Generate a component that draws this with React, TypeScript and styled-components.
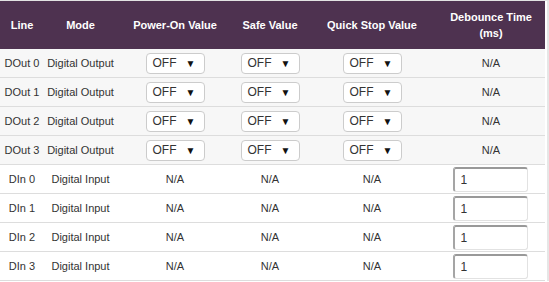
import { createGlobalStyle, styled } from "styled-components"

const Global = createGlobalStyle`
    body {
        margin: 0;
        background: #ffffff;
        font-family: "Liberation Sans", Arial, sans-serif;
    }
`

const Frame = styled.div`
    width: 547px;
    border-top: 1px solid #e2e2e2;
    border-right: 2px solid #e6e6e6;
`

const Table = styled.table`
    width: 545px;
    border-collapse: collapse;
    table-layout: fixed;
    font-size: 11px;
    color: #333333;
`

const HeadCell = styled.th`
    background: #4e3250;
    color: #ffffff;
    font-weight: bold;
    font-size: 11px;
    line-height: 16px;
    height: 48px;
    padding: 0 2px;
    text-align: center;
    vertical-align: middle;
`

const Row = styled.tr<{ $shade?: boolean }>`
    background: ${(p) => (p.$shade ? "#f7f7f7" : "#ffffff")};
    border-bottom: 1px solid #dddddd;
`

const Cell = styled.td`
    height: 28px;
    padding: 0;
    text-align: center;
    vertical-align: middle;
    white-space: nowrap;
`

const Select = styled.div`
    display: inline-flex;
    align-items: center;
    justify-content: space-between;
    box-sizing: border-box;
    width: 59px;
    height: 21px;
    padding: 0 8px 0 6px;
    border: 1px solid #cccccc;
    border-radius: 4px;
    background: #ffffff;
    font-size: 12px;
    color: #333333;
    vertical-align: middle;
`

const Arrow = styled.span`
    font-size: 10px;
    color: #111111;
`

const Input = styled.input`
    box-sizing: border-box;
    width: 75px;
    height: 25px;
    padding: 0 0 0 6px;
    border-top: 2px solid #999999;
    border-left: 2px solid #a5a5a5;
    border-right: 1px solid #e2e2e2;
    border-bottom: 1px solid #e2e2e2;
    border-radius: 3px;
    font-family: "Liberation Sans", Arial, sans-serif;
    font-size: 12px;
    color: #333333;
    vertical-align: middle;
    margin-left: -2px;
`

function OffSelect() {
    return (
        <Select>
            <span>OFF</span>
            <Arrow>▼</Arrow>
        </Select>
    )
}

const outputs = [0, 1, 2, 3]
const inputs = [0, 1, 2, 3]

export default function App() {
    return (
        <>
            <Global />
            <Frame>
                <Table>
                    <colgroup>
                        <col style={{ width: 44 }} />
                        <col style={{ width: 73 }} />
                        <col style={{ width: 116 }} />
                        <col style={{ width: 74 }} />
                        <col style={{ width: 130 }} />
                        <col style={{ width: 108 }} />
                    </colgroup>
                    <thead>
                        <tr>
                            <HeadCell>Line</HeadCell>
                            <HeadCell>Mode</HeadCell>
                            <HeadCell>Power-On Value</HeadCell>
                            <HeadCell>Safe Value</HeadCell>
                            <HeadCell>Quick Stop Value</HeadCell>
                            <HeadCell>Debounce Time<br />(ms)</HeadCell>
                        </tr>
                    </thead>
                    <tbody>
                        {outputs.map((n) => (
                            <Row $shade key={"o" + n}>
                                <Cell>DOut {n}</Cell>
                                <Cell>Digital Output</Cell>
                                <Cell><OffSelect /></Cell>
                                <Cell><OffSelect /></Cell>
                                <Cell><OffSelect /></Cell>
                                <Cell>N/A</Cell>
                            </Row>
                        ))}
                        {inputs.map((n) => (
                            <Row key={"i" + n}>
                                <Cell>DIn {n}</Cell>
                                <Cell>Digital Input</Cell>
                                <Cell>N/A</Cell>
                                <Cell>N/A</Cell>
                                <Cell>N/A</Cell>
                                <Cell><Input defaultValue="1" /></Cell>
                            </Row>
                        ))}
                    </tbody>
                </Table>
            </Frame>
        </>
    )
}
